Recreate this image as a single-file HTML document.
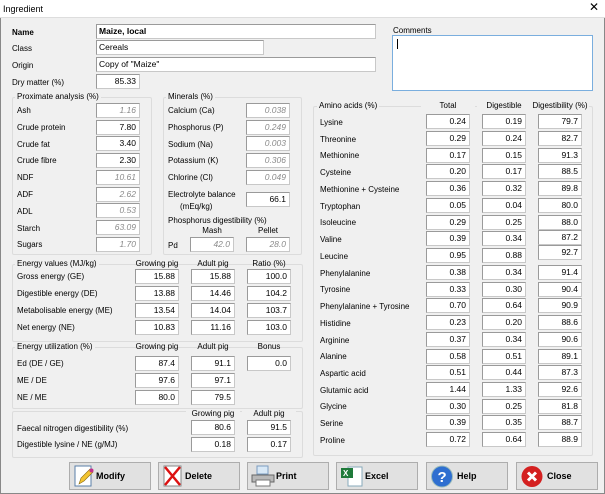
<!DOCTYPE html>
<html><head><meta charset="utf-8"><style>
body{margin:0;width:605px;height:494px;overflow:hidden;background:#f0f0f0;font-family:"Liberation Sans",Arial,sans-serif;font-size:8px;color:#000;position:relative}
div,span{position:absolute;box-sizing:border-box}
.l{white-space:nowrap;line-height:11px}
.i{background:#fff;border:1px solid #9a9a9a;border-bottom-color:#c8c8c8;border-right-color:#c8c8c8;width:44px;height:15px;text-align:right;padding-right:3px;line-height:13px;font-size:8.5px}
.g{color:#8a8a8a;font-style:italic}
.f{border:1px solid #dcdcdc;border-radius:2px}
.t{background:#f0f0f0;padding:0 2px;white-space:nowrap;line-height:10px}
.c{text-align:center;white-space:nowrap;line-height:10px}
.b{background:#e1e1e1;border:1px solid #adadad;height:28px;top:462px;font-weight:bold;font-size:9px;line-height:26px}
.b span{white-space:nowrap}
</style></head><body>
<div style="left:0;top:0;width:605px;height:18px;background:#fff;border-bottom:1px solid #ddd"></div>
<div class="l" style="left:3px;top:4px;font-size:9px">Ingredient</div>
<div class="l" style="left:589px;top:2px;font-size:12px">✕</div>
<div style="left:0;top:18px;width:1px;height:476px;background:#888"></div>
<div style="left:604px;top:18px;width:1px;height:476px;background:#888"></div>
<div style="left:0;top:493px;width:605px;height:1px;background:#888"></div>

<div class="l" style="left:12px;top:27px;font-weight:bold">Name</div>
<div class="i" style="left:96px;top:24px;width:280px;text-align:left;padding-left:2px;font-weight:bold">Maize, local</div>
<div class="l" style="left:12px;top:43px">Class</div>
<div class="i" style="left:96px;top:40px;width:168px;text-align:left;padding-left:2px">Cereals</div>
<div class="l" style="left:12px;top:60px">Origin</div>
<div class="i" style="left:96px;top:57px;width:280px;text-align:left;padding-left:2px">Copy of "Maize"</div>
<div class="l" style="left:12px;top:77px">Dry matter (%)</div>
<div class="i" style="left:96px;top:74px">85.33</div>

<div class="l" style="left:393px;top:25px">Comments</div>
<div style="left:392px;top:35px;width:201px;height:56px;background:#fff;border:1px solid #7aaede"></div>
<div style="left:397px;top:39px;width:1px;height:10px;background:#000"></div>

<div class="f" style="left:12px;top:97px;width:140px;height:158px"></div>
<div class="t" style="left:15px;top:92px">Proximate analysis (%)</div>
<div class="l" style="left:17px;top:105px">Ash</div><div class="i g" style="left:96px;top:103px">1.16</div>
<div class="l" style="left:17px;top:122px">Crude protein</div><div class="i" style="left:96px;top:120px">7.80</div>
<div class="l" style="left:17px;top:139px">Crude fat</div><div class="i" style="left:96px;top:136px">3.40</div>
<div class="l" style="left:17px;top:155px">Crude fibre</div><div class="i" style="left:96px;top:153px">2.30</div>
<div class="l" style="left:17px;top:172px">NDF</div><div class="i g" style="left:96px;top:170px">10.61</div>
<div class="l" style="left:17px;top:189px">ADF</div><div class="i g" style="left:96px;top:187px">2.62</div>
<div class="l" style="left:17px;top:206px">ADL</div><div class="i g" style="left:96px;top:203px">0.53</div>
<div class="l" style="left:17px;top:223px">Starch</div><div class="i g" style="left:96px;top:220px">63.09</div>
<div class="l" style="left:17px;top:239px">Sugars</div><div class="i g" style="left:96px;top:237px">1.70</div>

<div class="f" style="left:163px;top:97px;width:139px;height:158px"></div>
<div class="t" style="left:166px;top:92px">Minerals (%)</div>
<div class="l" style="left:168px;top:105px">Calcium (Ca)</div><div class="i g" style="left:246px;top:103px">0.038</div>
<div class="l" style="left:168px;top:122px">Phosphorus (P)</div><div class="i g" style="left:246px;top:120px">0.249</div>
<div class="l" style="left:168px;top:139px">Sodium (Na)</div><div class="i g" style="left:246px;top:136px">0.003</div>
<div class="l" style="left:168px;top:155px">Potassium (K)</div><div class="i g" style="left:246px;top:153px">0.306</div>
<div class="l" style="left:168px;top:172px">Chlorine (Cl)</div><div class="i g" style="left:246px;top:170px">0.049</div>
<div class="l" style="left:168px;top:189px">Electrolyte balance</div>
<div class="l" style="left:180px;top:201px">(mEq/kg)</div><div class="i" style="left:246px;top:192px">66.1</div>
<div class="l" style="left:168px;top:215px">Phosphorus digestibility (%)</div>
<div class="c" style="left:190px;top:226px;width:44px">Mash</div>
<div class="c" style="left:246px;top:226px;width:44px">Pellet</div>
<div class="l" style="left:168px;top:240px">Pd</div>
<div class="i g" style="left:190px;top:237px">42.0</div><div class="i g" style="left:246px;top:237px">28.0</div>

<div class="f" style="left:12px;top:264px;width:291px;height:78px"></div>
<div class="t" style="left:15px;top:259px">Energy values (MJ/kg)</div>
<div class="c" style="left:130px;top:259px;width:54px">Growing pig</div>
<div class="c" style="left:186px;top:259px;width:54px">Adult pig</div>
<div class="c" style="left:242px;top:259px;width:54px">Ratio (%)</div>
<div class="l" style="left:17px;top:271px">Gross energy (GE)</div>
<div class="i" style="left:135px;top:269px">15.88</div><div class="i" style="left:191px;top:269px">15.88</div><div class="i" style="left:247px;top:269px">100.0</div>
<div class="l" style="left:17px;top:288px">Digestible energy (DE)</div>
<div class="i" style="left:135px;top:286px">13.88</div><div class="i" style="left:191px;top:286px">14.46</div><div class="i" style="left:247px;top:286px">104.2</div>
<div class="l" style="left:17px;top:305px">Metabolisable energy (ME)</div>
<div class="i" style="left:135px;top:303px">13.54</div><div class="i" style="left:191px;top:303px">14.04</div><div class="i" style="left:247px;top:303px">103.7</div>
<div class="l" style="left:17px;top:322px">Net energy (NE)</div>
<div class="i" style="left:135px;top:320px">10.83</div><div class="i" style="left:191px;top:320px">11.16</div><div class="i" style="left:247px;top:320px">103.0</div>

<div class="f" style="left:12px;top:347px;width:291px;height:62px"></div>
<div class="t" style="left:15px;top:342px">Energy utilization (%)</div>
<div class="c" style="left:130px;top:342px;width:54px">Growing pig</div>
<div class="c" style="left:186px;top:342px;width:54px">Adult pig</div>
<div class="c" style="left:242px;top:342px;width:54px">Bonus</div>
<div class="l" style="left:17px;top:358px">Ed (DE / GE)</div>
<div class="i" style="left:135px;top:356px">87.4</div><div class="i" style="left:191px;top:356px">91.1</div><div class="i" style="left:247px;top:356px">0.0</div>
<div class="l" style="left:17px;top:375px">ME / DE</div>
<div class="i" style="left:135px;top:373px">97.6</div><div class="i" style="left:191px;top:373px">97.1</div>
<div class="l" style="left:17px;top:392px">NE / ME</div>
<div class="i" style="left:135px;top:390px">80.0</div><div class="i" style="left:191px;top:390px">79.5</div>

<div class="f" style="left:12px;top:411px;width:291px;height:47px"></div>
<div class="c" style="left:186px;top:409px;width:54px;background:#f0f0f0">Growing pig</div>
<div class="c" style="left:242px;top:409px;width:54px;background:#f0f0f0">Adult pig</div>
<div class="l" style="left:17px;top:423px">Faecal nitrogen digestibility (%)</div>
<div class="i" style="left:191px;top:420px">80.6</div><div class="i" style="left:247px;top:420px">91.5</div>
<div class="l" style="left:17px;top:439px">Digestible lysine / NE (g/MJ)</div>
<div class="i" style="left:191px;top:437px">0.18</div><div class="i" style="left:247px;top:437px">0.17</div>

<div class="f" style="left:313px;top:106px;width:280px;height:350px"></div>
<div class="t" style="left:317px;top:101px">Amino acids (%)</div>
<div class="c" style="left:421px;top:101px;width:54px;background:#f0f0f0">Total</div>
<div class="c" style="left:477px;top:101px;width:54px;background:#f0f0f0">Digestible</div>
<div class="c" style="left:531px;top:101px;width:58px;background:#f0f0f0">Digestibility (%)</div>

<div class="l" style="left:320px;top:117px">Lysine</div><div class="i" style="left:426px;top:114px">0.24</div><div class="i" style="left:482px;top:114px">0.19</div><div class="i" style="left:538px;top:114px">79.7</div>
<div class="l" style="left:320px;top:134px">Threonine</div><div class="i" style="left:426px;top:131px">0.29</div><div class="i" style="left:482px;top:131px">0.24</div><div class="i" style="left:538px;top:131px">82.7</div>
<div class="l" style="left:320px;top:150px">Methionine</div><div class="i" style="left:426px;top:148px">0.17</div><div class="i" style="left:482px;top:148px">0.15</div><div class="i" style="left:538px;top:148px">91.3</div>
<div class="l" style="left:320px;top:167px">Cysteine</div><div class="i" style="left:426px;top:164px">0.20</div><div class="i" style="left:482px;top:164px">0.17</div><div class="i" style="left:538px;top:164px">88.5</div>
<div class="l" style="left:320px;top:184px">Methionine + Cysteine</div><div class="i" style="left:426px;top:181px">0.36</div><div class="i" style="left:482px;top:181px">0.32</div><div class="i" style="left:538px;top:181px">89.8</div>
<div class="l" style="left:320px;top:201px">Tryptophan</div><div class="i" style="left:426px;top:198px">0.05</div><div class="i" style="left:482px;top:198px">0.04</div><div class="i" style="left:538px;top:198px">80.0</div>
<div class="l" style="left:320px;top:217px">Isoleucine</div><div class="i" style="left:426px;top:215px">0.29</div><div class="i" style="left:482px;top:215px">0.25</div><div class="i" style="left:538px;top:215px">88.0</div>
<div class="l" style="left:320px;top:234px">Valine</div><div class="i" style="left:426px;top:231px">0.39</div><div class="i" style="left:482px;top:231px">0.34</div><div class="i" style="left:538px;top:230px">87.2</div>
<div class="l" style="left:320px;top:251px">Leucine</div><div class="i" style="left:426px;top:248px">0.95</div><div class="i" style="left:482px;top:248px">0.88</div><div class="i" style="left:538px;top:245px">92.7</div>
<div class="l" style="left:320px;top:268px">Phenylalanine</div><div class="i" style="left:426px;top:265px">0.38</div><div class="i" style="left:482px;top:265px">0.34</div><div class="i" style="left:538px;top:265px">91.4</div>
<div class="l" style="left:320px;top:284px">Tyrosine</div><div class="i" style="left:426px;top:282px">0.33</div><div class="i" style="left:482px;top:282px">0.30</div><div class="i" style="left:538px;top:282px">90.4</div>
<div class="l" style="left:320px;top:301px">Phenylalanine + Tyrosine</div><div class="i" style="left:426px;top:298px">0.70</div><div class="i" style="left:482px;top:298px">0.64</div><div class="i" style="left:538px;top:298px">90.9</div>
<div class="l" style="left:320px;top:318px">Histidine</div><div class="i" style="left:426px;top:315px">0.23</div><div class="i" style="left:482px;top:315px">0.20</div><div class="i" style="left:538px;top:315px">88.6</div>
<div class="l" style="left:320px;top:335px">Arginine</div><div class="i" style="left:426px;top:332px">0.37</div><div class="i" style="left:482px;top:332px">0.34</div><div class="i" style="left:538px;top:332px">90.6</div>
<div class="l" style="left:320px;top:351px">Alanine</div><div class="i" style="left:426px;top:349px">0.58</div><div class="i" style="left:482px;top:349px">0.51</div><div class="i" style="left:538px;top:349px">89.1</div>
<div class="l" style="left:320px;top:368px">Aspartic acid</div><div class="i" style="left:426px;top:365px">0.51</div><div class="i" style="left:482px;top:365px">0.44</div><div class="i" style="left:538px;top:365px">87.3</div>
<div class="l" style="left:320px;top:385px">Glutamic acid</div><div class="i" style="left:426px;top:382px">1.44</div><div class="i" style="left:482px;top:382px">1.33</div><div class="i" style="left:538px;top:382px">92.6</div>
<div class="l" style="left:320px;top:401px">Glycine</div><div class="i" style="left:426px;top:399px">0.30</div><div class="i" style="left:482px;top:399px">0.25</div><div class="i" style="left:538px;top:399px">81.8</div>
<div class="l" style="left:320px;top:418px">Serine</div><div class="i" style="left:426px;top:415px">0.39</div><div class="i" style="left:482px;top:415px">0.35</div><div class="i" style="left:538px;top:415px">88.7</div>
<div class="l" style="left:320px;top:435px">Proline</div><div class="i" style="left:426px;top:432px">0.72</div><div class="i" style="left:482px;top:432px">0.64</div><div class="i" style="left:538px;top:432px">88.9</div>

<div class="b" style="left:69px;width:82px">
<svg style="position:absolute;left:3px;top:2px" width="22" height="22"><rect x="2" y="1" width="16" height="20" fill="#fff" stroke="#5a7fa8"/><path d="M6 19l2-6 9-9 3 3-9 9z" fill="#f3c431" stroke="#8a6a10" stroke-width=".6"/><circle cx="18.5" cy="5.5" r="2" fill="#c2308a"/></svg>
<span style="left:26px">Modify</span></div>
<div class="b" style="left:158px;width:82px">
<svg style="position:absolute;left:3px;top:2px" width="22" height="22"><rect x="2" y="1" width="17" height="20" fill="#fff" stroke="#888"/><path d="M3 2l15 18M18 2L3 20" stroke="#d11" stroke-width="2.5"/></svg>
<span style="left:26px">Delete</span></div>
<div class="b" style="left:247px;width:82px">
<svg style="position:absolute;left:3px;top:2px" width="24" height="22"><rect x="6" y="1" width="11" height="8" fill="#d8e8f6" stroke="#7a9cc0"/><path d="M1 10h22v7H1z" fill="#b8b8b8" stroke="#666"/><rect x="5" y="15" width="14" height="6" fill="#fff" stroke="#777"/></svg>
<span style="left:28px">Print</span></div>
<div class="b" style="left:336px;width:82px">
<svg style="position:absolute;left:3px;top:2px" width="24" height="22"><rect x="8" y="2" width="14" height="19" fill="#fff" stroke="#8ab"/><rect x="1" y="3" width="12" height="10" fill="#1f7a3a"/><text x="3" y="11" font-size="8" fill="#fff" font-family="Liberation Sans">X</text></svg>
<span style="left:28px">Excel</span></div>
<div class="b" style="left:426px;width:82px">
<svg style="position:absolute;left:3px;top:2px" width="24" height="24"><circle cx="12" cy="11.5" r="10.5" fill="#2f6fd0" stroke="#9bb" stroke-width="1"/><text x="7.5" y="17" font-size="15" font-weight="bold" fill="#fff" font-family="Liberation Sans">?</text></svg>
<span style="left:30px">Help</span></div>
<div class="b" style="left:516px;width:82px">
<svg style="position:absolute;left:3px;top:2px" width="24" height="24"><circle cx="12" cy="11.5" r="10.5" fill="#d42020"/><path d="M8 7.5l8 8M16 7.5l-8 8" stroke="#fff" stroke-width="3"/></svg>
<span style="left:30px">Close</span></div>
</body></html>
